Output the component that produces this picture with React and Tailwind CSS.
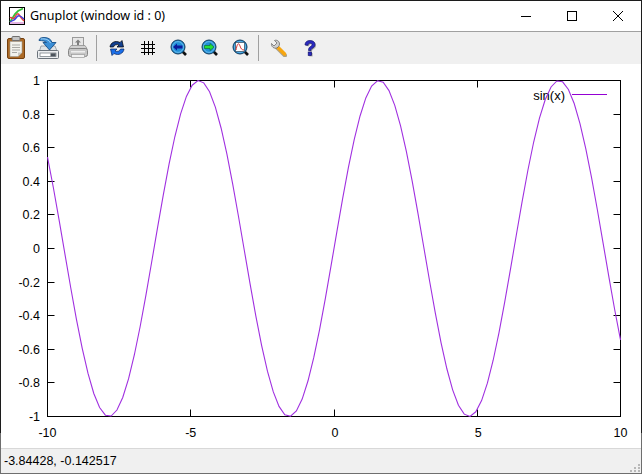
import React from "react";

const L = 47.5, R = 620.5, T = 80.5, B = 416.5;
const px = (x) => L + ((x + 10) / 20) * (R - L);
const py = (y) => T + ((1 - y) / 2) * (B - T);
const pts = Array.from({ length: 100 }, (_, i) => {
  const x = -10 + (20 * i) / 99;
  return `${px(x).toFixed(2)},${py(Math.sin(x)).toFixed(2)}`;
}).join(" ");
const yt = ["1", "0.8", "0.6", "0.4", "0.2", "0", "-0.2", "-0.4", "-0.6", "-0.8", "-1"];
const xt = [-10, -5, 0, 5, 10];

function Clipboard() {
  return (
    <svg width="24" height="26" viewBox="1 0 24 26">
      <rect x="3.500" y="3.500" width="17" height="20" rx="1.500" fill="#ac6a26" stroke="#74400f" />
      <path d="M6 6.500h12v11l-4 4H6z" fill="#f2f2ec" stroke="#9a9a94" strokeWidth=".6" />
      <path d="M14 21.500v-4h4z" fill="#c8c8c2" />
      <path d="M8 10h8M8 12.500h8M8 15h8M8 17.500h5" stroke="#a8a8a4" strokeWidth="1" />
      <rect x="8" y="1.500" width="8" height="4" rx="1" fill="#c4c4c4" stroke="#6f6f6f" />
    </svg>
  );
}
function Save() {
  return (
    <svg width="24" height="24" viewBox="0 0 24 24">
      <path d="M3.500 15 5 10h14l2 5z" fill="#dfe3e6" stroke="#8a939c" strokeWidth=".8" />
      <rect x="1.500" y="14.500" width="21" height="8" rx="1" fill="#eceef0" stroke="#6a727a" />
      <rect x="4" y="17" width="16" height="3.500" fill="#fff" stroke="#6a727a" strokeWidth=".7" />
      <rect x="14.500" y="17.300" width="5.200" height="3" fill="#4c545c" />
      <path d="M3 4.500C3 2.500 5 1.500 8 1.500c4 0 7 1.500 8 5h4l-6.500 7.500L7 6.500h3.500C9.500 5 6 4.500 3 4.500z" fill="#3a8ed6" stroke="#174f88" strokeWidth=".9" />
      <path d="M5 3c4-.6 8 .6 9.500 4" stroke="#a9d6f5" strokeWidth="1" fill="none" />
    </svg>
  );
}
function Print() {
  return (
    <svg width="24" height="24" viewBox="1 0 24 24">
      <rect x="6.500" y="1.500" width="11" height="10" fill="#e6e6e6" stroke="#9a9a9a" />
      <path d="M12 3.500 9 6.500h2v2.500h2V6.500h2z" fill="#7e7e7e" />
      <path d="M3 12.500 5 9.500h14l2 3z" fill="#d0d0d0" stroke="#8f8f8f" strokeWidth=".8" />
      <rect x="2.500" y="12.500" width="19" height="8" rx="2" fill="#c6c6c6" stroke="#858585" />
      <rect x="5" y="15" width="14" height="1.500" fill="#eeeeee" />
      <rect x="5.500" y="18.500" width="13" height="3" fill="#f2f2f2" stroke="#9a9a9a" strokeWidth=".7" />
    </svg>
  );
}
function Refresh() {
  return (
    <svg width="18" height="18" viewBox="0 0 18 18">
      <path d="M2 8C2.500 3.500 7.500 1 12 3.500L14 1.500 15.500 8H9l2-2C8.500 5 6 6 5.500 8z" fill="#13408f" stroke="#000" strokeWidth=".7" />
      <path d="M16 10c-.5 4.500-5.500 7-10 4.500L4 16.500 2.500 10H9l-2 2c2.500 1 5 0 5.500-2z" fill="#1a6ee8" stroke="#06225c" strokeWidth=".7" />
    </svg>
  );
}
function Grid() {
  return (
    <svg width="16" height="16" viewBox="0 0 16 16" fill="none" stroke="#000" strokeWidth="1">
      <path d="M4.500 1v14M8.500 1v14M12.500 1v14M1 4.500h14M1 8.500h14M1 12.500h14" />
    </svg>
  );
}
function Lens({ children }) {
  return (
    <svg width="18" height="18" viewBox="0 0 18 18">
      <path d="M12 12l4 4" stroke="#111" strokeWidth="2.600" />
      <circle cx="8" cy="8" r="7" fill="#1f8fd8" stroke="#123a5c" strokeWidth="1" />
      <circle cx="8" cy="8" r="5.400" fill="none" stroke="#7cc4ee" strokeWidth=".8" />
      {children}
    </svg>
  );
}
function Wrench() {
  return (
    <svg width="18" height="18" viewBox="0 0 18 18">
      <path d="M7 8.500 15 16.500" stroke="#6a5420" strokeWidth="4" strokeLinecap="round" opacity=".5" />
      <path d="M7 7.500 14.500 15" stroke="#f7a60f" strokeWidth="3.600" strokeLinecap="round" />
      <path d="M1.500 4.500 4 7l3-3-2.500-2.500C6.500 0.500 9.500 2 9.500 5c0 1.500-1 2.500-1 2.500L7 9C4 10 1 7.500 1.500 4.500z" fill="#cfcfcf" stroke="#5e5e5e" strokeWidth=".7" />
    </svg>
  );
}
function Help() {
  return (
    <svg width="14" height="18" viewBox="0 0 14 18">
      <path d="M3 7C3 4 5 2.500 8 2.500s5 1.600 5 4c0 2.200-1.500 3-3 4-.8.600-1 1-1 2H6.500c0-2 .5-3 2-4 1-.7 1.500-1 1.500-2 0-.8-.8-1.300-2-1.300S6.200 5.800 6 7.300z" fill="#a8a8a8" />
      <rect x="6.200" y="14" width="3.400" height="3.400" fill="#a8a8a8" />
      <path d="M2 6C2 3 4 1.500 7 1.500s5 1.600 5 4c0 2.200-1.500 3-3 4-.8.600-1 1-1 2H5.500c0-2 .5-3 2-4 1-.7 1.500-1 1.500-2 0-.8-.8-1.300-2-1.300S5.200 4.800 5 6.300z" fill="#2a2ac0" stroke="#14146e" strokeWidth=".7" />
      <rect x="5.200" y="13" width="3.400" height="3.400" fill="#2a2ac0" stroke="#14146e" strokeWidth=".7" />
    </svg>
  );
}
function AppIcon() {
  return (
    <svg width="16" height="18" viewBox="0 0 16 18" fill="none">
      <rect x=".5" y=".5" width="15" height="17" fill="#fff" stroke="#000" />
      <path d="M1 15 6 7l3-3 5-2.500" stroke="#35c235" strokeWidth="1.800" />
      <path d="M1 11c2-2 3 3 5-1s3-4 5-1 2 3 4 5" stroke="#e84040" strokeWidth="1.500" />
      <path d="M1 15c3-2 4-1 6-4s4-3 8 1" stroke="#4040e0" strokeWidth="1.500" />
      <path d="M1 16h14" stroke="#d080d0" strokeWidth="1.200" />
    </svg>
  );
}

const Btn = ({ children }) => (
  <div className="w-[31px] h-full flex items-center justify-center">{children}</div>
);
const Sep = () => <div className="w-px h-[26px] bg-[#a0a0a0] ml-[2px] mr-[4px]" />;

export default function App() {
  return (
    <div className="w-[642px] h-[474px] p-px flex flex-col overflow-hidden bg-[linear-gradient(#1c1c1c_433px,#6e6e6e_433px)] font-['Liberation_Sans',sans-serif] text-black">
      <div className="h-[30px] flex items-center bg-white shrink-0">
        <div className="ml-[8px] mr-[5px] flex"><AppIcon /></div>
        <span className="text-[12.5px] font-['Noto_Sans',sans-serif] text-black">Gnuplot (window id : 0)</span>
        <div className="ml-auto flex h-full">
          <div className="w-[46px] flex items-center justify-center">
            <svg width="10" height="10" viewBox="0 0 10 10"><path d="M0 5.500h10" stroke="#000" /></svg>
          </div>
          <div className="w-[46px] flex items-center justify-center">
            <svg width="10" height="10" viewBox="0 0 10 10" fill="none"><rect x=".5" y=".5" width="9" height="9" stroke="#000" /></svg>
          </div>
          <div className="w-[46px] flex items-center justify-center">
            <svg width="10" height="10" viewBox="0 0 10 10"><path d="M0 0l10 10M10 0 0 10" stroke="#000" /></svg>
          </div>
        </div>
      </div>
      <div className="h-px bg-[#a0a0a0] shrink-0" />
      <div className="h-[32px] bg-[#f0f0f0] flex items-center shrink-0">
        <Btn><Clipboard /></Btn>
        <Btn><Save /></Btn>
        <Btn><Print /></Btn>
        <Sep />
        <Btn><Refresh /></Btn>
        <Btn><Grid /></Btn>
        <Btn>
          <Lens><path d="M3 8l4-3.500V6.500h5.500v3H7v2z" fill="#0a1a9c" /></Lens>
        </Btn>
        <Btn>
          <Lens><path d="M13 8 9 4.500V6.500H3.500v3H9v2z" fill="#22e03a" stroke="#0a5a14" strokeWidth=".5" /></Lens>
        </Btn>
        <Btn>
          <Lens>
            <rect x="3.500" y="3.500" width="9" height="9" fill="#fff" stroke="#234" strokeWidth=".6" />
            <path d="M4 11c1.500-8 3-7 4-4s2 4 4 4" stroke="#d02020" fill="none" strokeWidth=".9" />
          </Lens>
        </Btn>
        <Sep />
        <Btn><Wrench /></Btn>
        <Btn><Help /></Btn>
      </div>
      <div className="flex-1 bg-white min-h-0">
        <svg className="block" width="640" height="384" viewBox="1 64 640 384">
          <g stroke="#000" strokeWidth="1" fill="none">
            <rect x={L} y={T} width={R - L} height={B - T} />
            {yt.map((_, i) => {
              const y = Math.round(T + (i * (B - T)) / 10 - 0.5) + 0.5;
              return <path key={i} d={`M${L} ${y}h7M${R} ${y}h-7`} />;
            })}
            {xt.map((v) => {
              const x = Math.round(px(v) - 0.5) + 0.5;
              return <path key={v} d={`M${x} ${B}v-7M${x} ${T}v7`} />;
            })}
          </g>
          <g fontSize="12.5" fill="#000" fontFamily="'Liberation Sans', sans-serif">
            {yt.map((t, i) => (
              <text key={t} x="40" y={T + (i * (B - T)) / 10 + 4.500} textAnchor="end">{t}</text>
            ))}
            {xt.map((v) => (
              <text key={v} x={px(v) + (v === 0 || v === 5 ? 1 : 0)} y="437" textAnchor="middle">{v}</text>
            ))}
            <text x="565" y="100" textAnchor="end" fontSize="13">sin(x)</text>
          </g>
          <polyline points={pts} fill="none" stroke="#a030e0" strokeWidth="1.100" />
          <path d="M572 94.500h35" stroke="#9400d3" strokeWidth="1" />
        </svg>
      </div>
      <div className="h-px bg-[#d8d8d8] shrink-0" />
      <div className="relative h-[24px] bg-[#f0f0f0] shrink-0 flex items-center pl-[3px] text-[12.5px]">
        <span>-3.84428, -0.142517</span>
        <svg className="absolute right-0 bottom-0" width="11" height="9" viewBox="0 0 11 9" fill="#b8b8b8">
          <rect x="8" y="0" width="2" height="2" />
          <rect x="4" y="3" width="2" height="2" />
          <rect x="8" y="3" width="2" height="2" />
          <rect x="0" y="6" width="2" height="2" />
          <rect x="4" y="6" width="2" height="2" />
          <rect x="8" y="6" width="2" height="2" />
        </svg>
      </div>
    </div>
  );
}
